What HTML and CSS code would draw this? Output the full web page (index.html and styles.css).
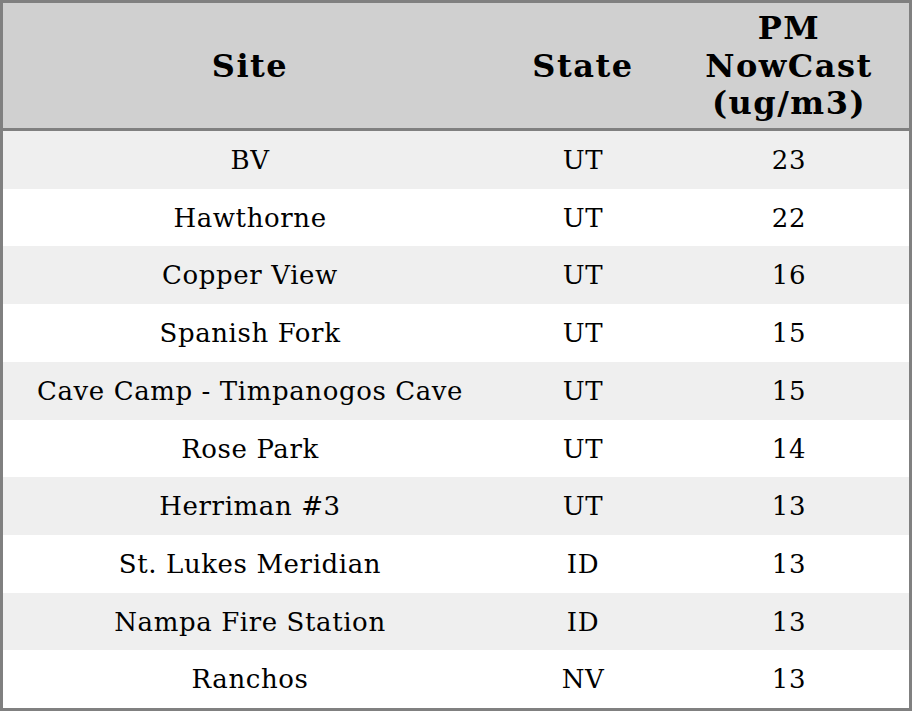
FILE: index.html
```html
<!DOCTYPE html>
<html>
<head>
<meta charset="utf-8">
<link rel="stylesheet" href="styles.css">
</head>
<body>
<table class="aq">
  <colgroup>
    <col class="c-site">
    <col class="c-state">
    <col class="c-pm">
  </colgroup>
  <thead>
    <tr>
      <th>Site</th>
      <th>State</th>
      <th>PM<br>NowCast<br>(ug/m3)</th>
    </tr>
  </thead>
  <tbody>
    <tr><td>BV</td><td>UT</td><td>23</td></tr>
    <tr><td>Hawthorne</td><td>UT</td><td>22</td></tr>
    <tr><td>Copper View</td><td>UT</td><td>16</td></tr>
    <tr><td>Spanish Fork</td><td>UT</td><td>15</td></tr>
    <tr><td>Cave Camp - Timpanogos Cave</td><td>UT</td><td>15</td></tr>
    <tr><td>Rose Park</td><td>UT</td><td>14</td></tr>
    <tr><td>Herriman #3</td><td>UT</td><td>13</td></tr>
    <tr><td>St. Lukes Meridian</td><td>ID</td><td>13</td></tr>
    <tr><td>Nampa Fire Station</td><td>ID</td><td>13</td></tr>
    <tr><td>Ranchos</td><td>NV</td><td>13</td></tr>
  </tbody>
</table>
</body>
</html>
```
FILE: styles.css
```css
html, body {
  margin: 0;
  padding: 0;
  background: #ffffff;
}
.aq {
  width: 912px;
  border-collapse: separate;
  border-spacing: 0;
  border: 3px solid #808080;
  font-family: "DejaVu Serif", serif;
  color: #000;
  table-layout: fixed;
}
.c-site { width: 494px; }
.c-state { width: 172px; }
.c-pm { width: 240px; }
.aq th {
  background: #d0d0d0;
  font-size: 32px;
  line-height: 37.5px;
  letter-spacing: 1.5px;
  font-weight: bold;
  text-align: center;
  padding: 7px 0 5.5px;
  border-bottom: 3px solid #808080;
}
.aq td {
  font-size: 26px;
  letter-spacing: 0.6px;
  line-height: 29.7px;
  text-align: center;
  padding: 15px 0 13px;
}
.aq tbody tr:nth-child(odd) td {
  background: #efefef;
}
```
